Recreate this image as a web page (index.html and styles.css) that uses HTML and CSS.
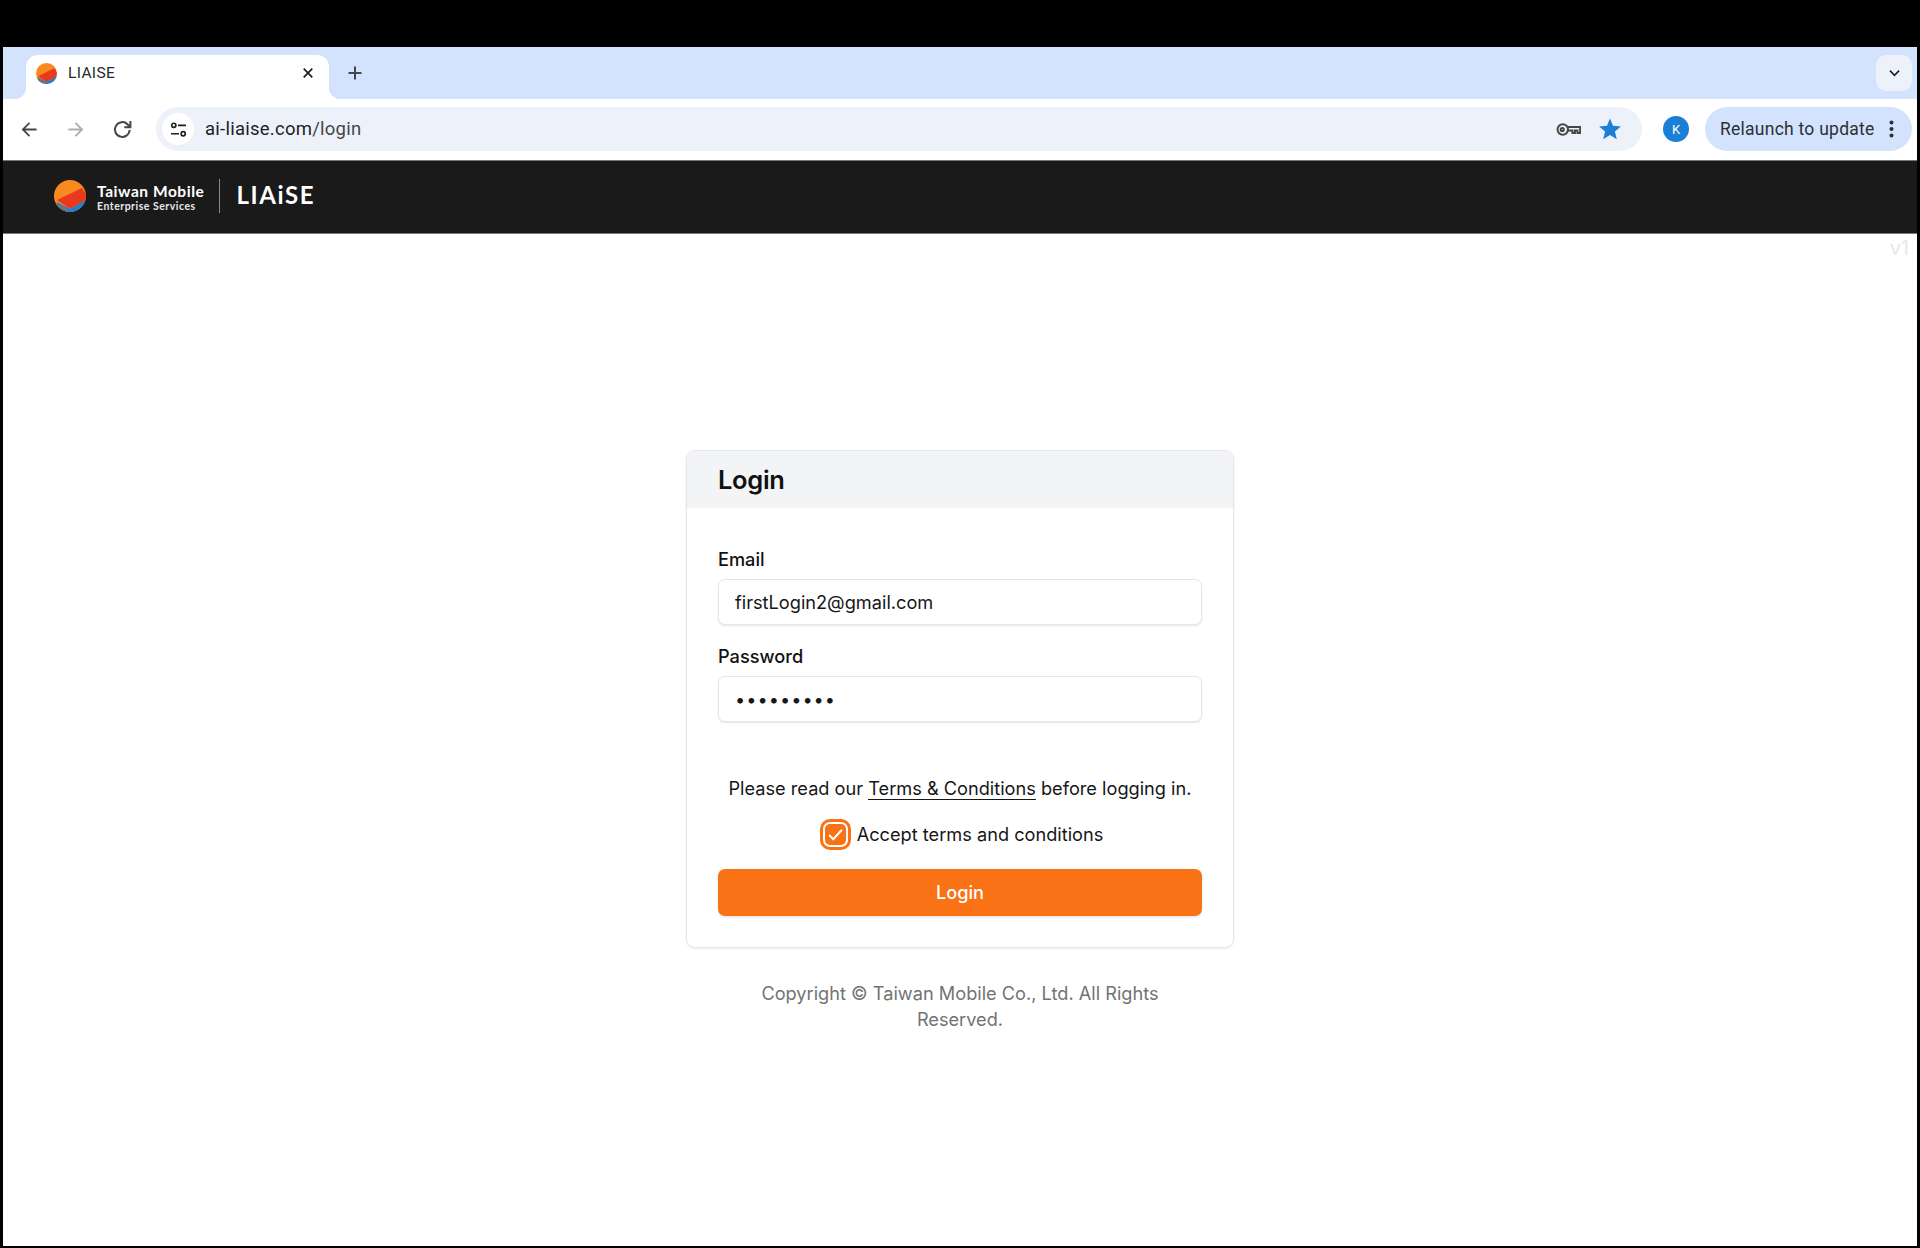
FILE: index.html
```html
<!DOCTYPE html>
<html lang="en">
<head>
<meta charset="utf-8">
<title>LIAISE</title>
<link rel="stylesheet" href="styles.css">
</head>
<body>
<div class="window">
  <div class="tabstrip">
    <div class="tab">
      <svg class="favicon" viewBox="0 0 32 32"><use href="#logo-mark"/></svg>
      <span class="tab-title">LIAISE</span>
      <svg class="tab-close" viewBox="0 0 14 14"><path d="M2 2l10 10M12 2L2 12"/></svg>
    </div>
    <svg class="new-tab" viewBox="0 0 16 16"><path d="M8 1.5v13M1.5 8h13"/></svg>
    <div class="tab-search"><svg viewBox="0 0 12 8"><path d="M1 1.5l5 5 5-5"/></svg></div>
  </div>
  <div class="toolbar">
    <svg class="nav" viewBox="0 0 18 18"><path d="M16.5 9H2M9 2L2 9l7 7"/></svg>
    <svg class="nav nav-off" viewBox="0 0 18 18"><path d="M1.5 9H16M9 2l7 7-7 7"/></svg>
    <svg class="nav nav-reload" viewBox="0 0 18 18"><path d="M15.8 9.500a7 7 0 1 1-2.100-5.500L16.500 6.800M16.500 1v5.800h-5.800"/></svg>
    <div class="omnibox">
      <span class="site-info"><svg viewBox="0 0 18 16"><circle cx="4" cy="3.5" r="2.2"/><path d="M8.5 3.5H17M1 12.5h8.5"/><circle cx="14" cy="12.5" r="2.2"/></svg></span>
      <span class="url">ai-liaise.com<span class="url-path">/login</span></span>
      <svg class="key" viewBox="0 0 24 14"><circle cx="6.500" cy="7" r="5" /><circle cx="6" cy="7" r="1.500"/><path d="M11.500 4.500H23.200v5.800h-2.600V8h-2.400v2.300h-2.400V8H11.500"/></svg>
      <svg class="star" viewBox="0 0 24 24"><path d="M12 1.5l3 7.3 7.9.6-6 5.1 1.9 7.700L12 18.100l-6.800 4.100 1.900-7.700-6-5.100 7.900-.6z"/></svg>
    </div>
    <div class="avatar">K</div>
    <div class="relaunch">
      <span>Relaunch to update</span>
      <svg viewBox="0 0 4 18"><circle cx="2" cy="2.500" r="2"/><circle cx="2" cy="9" r="2"/><circle cx="2" cy="15.500" r="2"/></svg>
    </div>
  </div>
  <header class="app-header">
    <svg class="logo-mark" viewBox="0 0 32 32">
      <defs>
        <g id="logo-mark">
          <clipPath id="disc"><circle cx="16" cy="16" r="16"/></clipPath>
          <g clip-path="url(#disc)">
            <rect width="32" height="32" fill="#fb8a1e"/>
            <path d="M3 20L28 8l4 6v6L16 29z" fill="#e8391f"/>
            <path d="M3 22l13 7 16-9v12H0z" fill="#1f7fd1"/>
            <path d="M3 23l10 5v4H3z" fill="#6a747b"/>
          </g>
        </g>
      </defs>
      <use href="#logo-mark"/>
    </svg>
    <div class="brand">
      <span class="brand-name">Taiwan Mobile</span>
      <span class="brand-sub">Enterprise Services</span>
    </div>
    <span class="brand-rule"></span>
    <span class="product">LIAiSE</span>
  </header>
  <main class="page">
    <span class="version">v1</span>
    <section class="card">
      <h1 class="card-title">Login</h1>
      <form class="card-body">
        <label class="field-label" for="email">Email</label>
        <input class="field" id="email" type="text" value="firstLogin2@gmail.com">
        <label class="field-label field-label-next" for="password">Password</label>
        <input class="field field-pass" id="password" type="password" value="123456789">
        <p class="terms">Please read our <a class="terms-link" href="#">Terms &amp; Conditions</a> before logging in.</p>
        <div class="accept">
          <span class="check"><svg viewBox="0 0 16 16"><path d="M2 8.500l3.900 3.900L14 3.500"/></svg></span>
          <span>Accept terms and conditions</span>
        </div>
        <button class="submit" type="button">Login</button>
      </form>
    </section>
    <p class="copyright">Copyright © Taiwan Mobile Co., Ltd. All Rights Reserved.</p>
  </main>
</div>
</body>
</html>
```
FILE: styles.css
```css
* { box-sizing: border-box; }
html, body { margin: 0; height: 100%; }
body { background: #000; font-family: Inter, "Liberation Sans", sans-serif; color: #171717; }
.window {
  height: 1248px;
  padding: 47px 3px 2px;
  display: flex;
  flex-direction: column;
}

/* browser tabs */
.tabstrip {
  height: 52px;
  flex: none;
  background: #d3e3fd;
  display: flex;
  align-items: flex-start;
  padding: 8px 5px 0 23px;
}
.tab {
  position: relative;
  width: 303px;
  height: 44px;
  background: #fff;
  border-radius: 12px 12px 0 0;
  display: flex;
  align-items: center;
  padding: 0 0 8px 10px;
}
.tab::before, .tab::after {
  content: "";
  position: absolute;
  bottom: 0;
  width: 12px;
  height: 12px;
}
.tab::before { left: -12px; background: radial-gradient(circle at 0 0, transparent 12px, #fff 12.500px); }
.tab::after { right: -12px; background: radial-gradient(circle at 100% 0, transparent 12px, #fff 12.500px); }
.favicon { width: 21px; height: 21px; flex: none; }
.tab-title { margin-left: 11px; font: 15.500px Roboto, sans-serif; letter-spacing: .35px; color: #28292c; flex: 1; }
.tab-close { width: 12px; height: 12px; margin-right: 15px; fill: none; stroke: #1f1f1f; stroke-width: 2; }
.new-tab { width: 16px; height: 16px; margin: 10px 0 0 18px; fill: none; stroke: #444746; stroke-width: 2; }
.tab-search {
  margin-left: auto;
  width: 36px;
  height: 36px;
  border-radius: 10px;
  background: #edf1fa;
  display: flex;
  align-items: center;
  justify-content: center;
}
.tab-search svg { width: 11px; height: 8px; fill: none; stroke: #1f1f1f; stroke-width: 1.800; }

/* browser toolbar */
.toolbar {
  height: 62px;
  flex: none;
  background: #fff;
  border-bottom: 1px solid #777;
  display: flex;
  align-items: center;
  padding: 0 5px 1px 18px;
}
.nav { width: 17px; height: 17px; flex: none; margin-right: 29px; fill: none; stroke: #474747; stroke-width: 1.900; }
.nav-off { stroke: #adadad; }
.nav-reload { width: 19px; height: 19px; margin-right: 24px; }
.omnibox {
  flex: 1;
  height: 44px;
  border-radius: 22px;
  background: #edf1fa;
  display: flex;
  align-items: center;
  padding: 0 20px 0 6px;
}
.site-info {
  width: 32px;
  height: 32px;
  border-radius: 50%;
  background: #fff;
  display: flex;
  align-items: center;
  justify-content: center;
}
.site-info svg { width: 17px; height: 15px; fill: none; stroke: #1f1f1f; stroke-width: 1.800; }
.url { margin-left: 11px; flex: 1; font: 18.500px Roboto, sans-serif; letter-spacing: .25px; color: #1f1f1f; }
.url-path { color: #444746; }
.key { width: 25px; height: 15px; margin-right: 17px; fill: none; stroke: #474747; stroke-width: 1.900; }
.star { width: 24px; height: 24px; fill: #1b7fd6; }
.avatar {
  width: 26px;
  height: 26px;
  margin: 0 16px 0 21px;
  border-radius: 50%;
  background: #1b7fd6;
  color: #fff;
  font: 13px Roboto, sans-serif;
  display: flex;
  align-items: center;
  justify-content: center;
}
.relaunch {
  width: 207px;
  height: 44px;
  border-radius: 22px;
  background: #d3e3fd;
  display: flex;
  align-items: center;
  padding: 0 18px 0 15px;
  justify-content: space-between;
  font: 17.500px Roboto, sans-serif;
  letter-spacing: .25px;
  color: #2d3033;
}
.relaunch svg { width: 5px; height: 18px; fill: #2d3033; }

/* app header */
.app-header {
  height: 73px;
  flex: none;
  background: #1a1a1a;
  border-bottom: 1px solid #777;
  display: flex;
  align-items: center;
  padding: 0 0 2px 51px;
  color: #fff;
}
.logo-mark { width: 32px; height: 32px; flex: none; }
.brand { display: flex; flex-direction: column; margin-left: 11px; margin-top: 2px; font-family: Lato, sans-serif; font-weight: 700; }
.brand-name { font-size: 15.500px; line-height: 17px; letter-spacing: .55px; }
.brand-sub { font-size: 10.500px; line-height: 12px; letter-spacing: .5px; color: #e8e8e8; }
.brand-rule { width: 1px; height: 34px; margin: 0 16px 0 15px; background: #888; }
.product { font: 700 24px Lato, sans-serif; letter-spacing: 1.600px; line-height: 24px; margin-top: -3px; }

/* login page */
.page {
  position: relative;
  flex: 1;
  background: #fff;
  display: flex;
  flex-direction: column;
  align-items: center;
  padding-top: 216px;
}
.version {
  position: absolute;
  top: 1px;
  right: 8px;
  font-size: 20px;
  line-height: 26px;
  color: #e6e8eb;
}
.card {
  width: 548px;
  height: 498px;
  flex: none;
  background: #fff;
  border: 1px solid #e5e7eb;
  border-radius: 9px;
  box-shadow: 0 1px 3px rgba(0,0,0,.08);
  overflow: hidden;
}
.card-title {
  margin: 0;
  height: 57px;
  padding: 0 31px;
  background: #f3f4f6;
  font-size: 25.500px;
  font-weight: 600;
  line-height: 57px;
  letter-spacing: -.3px;
  color: #111;
}
.card-body { display: flex; flex-direction: column; padding: 38px 31px 0; font-size: 18.200px; line-height: 26px; }
.field-label { font-weight: 500; color: #111; height: 26px; margin-bottom: 7px; font-size: 18.200px; }
.field-label-next { margin-top: 18px; }
.field {
  height: 46px;
  width: 100%;
  flex: none;
  border: 1px solid #e5e7eb;
  border-radius: 7px;
  box-shadow: 0 1px 2px rgba(0,0,0,.1);
  padding: 0 16px;
  font: 18.200px Inter, sans-serif;
  color: #171717;
  background: #fff;
  outline: none;
}
.field-pass { letter-spacing: 1px; }
.terms { margin: 53px 0 0; text-align: center; font-size: 18.200px; line-height: 26px; }
.terms-link { color: inherit; text-decoration: none; border-bottom: 1.500px solid #171717; }
.accept { display: flex; align-items: center; justify-content: center; gap: 6px; margin-top: 17px; height: 32px; padding-left: 3px; font-size: 18.200px; }
.check {
  width: 31px;
  height: 31px;
  flex: none;
  border: 3px solid #f97316;
  border-radius: 10px;
  padding: 2px;
  background: #fff;
}
.check svg {
  display: block;
  width: 100%;
  height: 100%;
  background: #f97316;
  border-radius: 5px;
  padding: 2px;
  fill: none;
  stroke: #fff;
  stroke-width: 1.900;
}
.submit {
  height: 47px;
  margin-top: 19px;
  padding-bottom: 3px;
  border: 0;
  border-radius: 7px;
  background: #f97316;
  color: #fff;
  font: 500 18.200px Inter, sans-serif;
  box-shadow: 0 1px 3px rgba(0,0,0,.12);
}
.copyright {
  width: 548px;
  margin: 32px 0 0;
  padding: 0 32px;
  text-align: center;
  font-size: 18.200px;
  line-height: 26px;
  color: #737373;
}
```
